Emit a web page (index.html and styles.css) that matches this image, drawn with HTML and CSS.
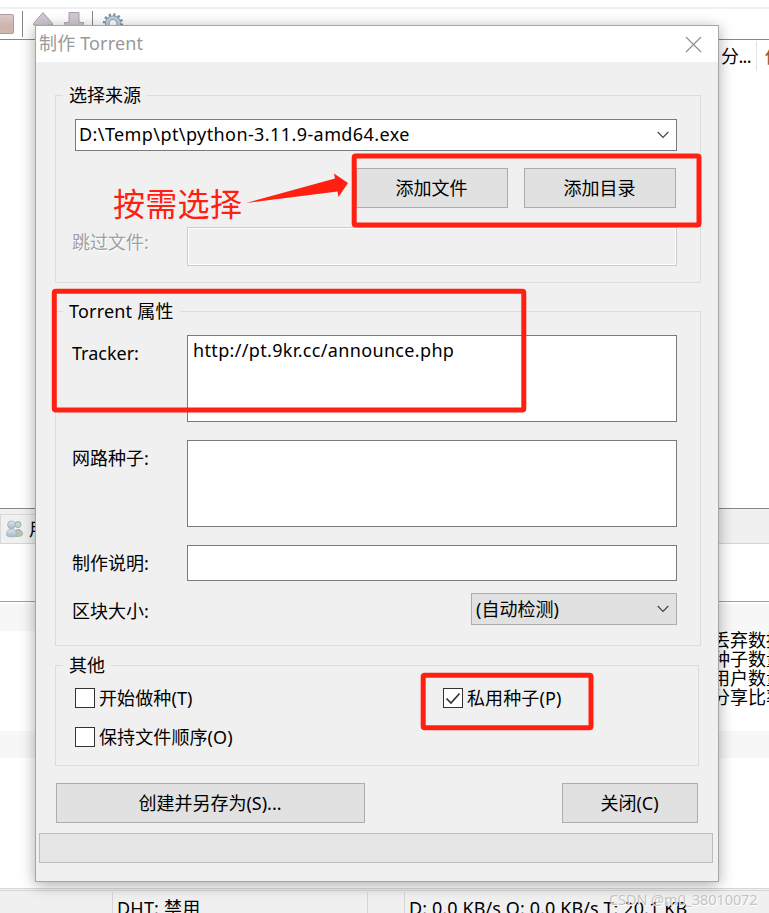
FILE: index.html
```html
<!DOCTYPE html>
<html lang="zh-CN">
<head>
<meta charset="utf-8">
<title>制作 Torrent</title>
<link rel="stylesheet" href="styles.css">
</head>
<body>
<div class="app">
  <header class="toolbar">
    <svg class="toolbar-icons" width="140" height="31" viewBox="0 0 140 31">
      <defs>
        <linearGradient id="stop" x1="0" y1="0" x2="0" y2="1"><stop offset="0" stop-color="#dccaca"/><stop offset=".6" stop-color="#cfb3ae"/><stop offset="1" stop-color="#cdb9a9"/></linearGradient>
        <linearGradient id="people" x1="0" y1="0" x2="0" y2="1"><stop offset="0" stop-color="#dfe5ea"/><stop offset="1" stop-color="#a9b9c6"/></linearGradient>
      </defs>
      <rect x="-6" y="6.5" width="19.5" height="19" rx="1.5" fill="url(#stop)" stroke="#b39a9a"/>
      <path d="M22.5 3v26M92.500 3v26" stroke="#858585"/>
      <path d="M43 4.500 52.500 15.500V17H48v8H38v-8h-4.500v-1.500z" fill="#d0c7d3" stroke="#aaa0ad"/>
      <path d="M69 4.500h10v10h4.500V16L74 25.500 64.500 16v-1.500H69z" fill="#d0c7d3" stroke="#aaa0ad"/>
      <circle cx="113" cy="15.500" r="8.500" fill="none" stroke="#7e93a5" stroke-width="3.500" stroke-dasharray="2.230 2.220"/>
      <circle cx="113" cy="15.500" r="5.800" fill="none" stroke="#7d93a5" stroke-width="4.600"/>
      <circle cx="113" cy="15.500" r="5.800" fill="none" stroke="#bccfde" stroke-width="3"/>
    </svg>
  </header>
  <section class="list">
    <div class="columns"><span class="col">分...</span><span class="col value">估计</span></div>
  </section>
  <nav class="tabs">
    <div class="tab">
      <svg width="18" height="18" viewBox="0 0 18 18">
        <path d="M8.500 16.500c0-4 .5-7 3.500-7s4.500 2 4.500 5c0 1.500-3 2-8 2z" fill="#b5c4b5" stroke="#93a394" stroke-width=".8"/>
        <circle cx="12" cy="4.500" r="3" fill="#c7d2c8" stroke="#93a394" stroke-width=".8"/>
        <path d="M.6 15c0-4 1.500-6 4.900-6s4.800 2 4.800 6c0 2.500-9.700 2.500-9.700 0z" fill="url(#people)" stroke="#9eafba" stroke-width=".8"/>
        <circle cx="5.500" cy="4.800" r="3.900" fill="url(#people)" stroke="#9eafba" stroke-width=".8"/>
      </svg>
      <span>用户</span>
    </div>
  </nav>
  <section class="details">
    <div class="band"></div>
    <ul class="stats"><li>丢弃数据</li><li>种子数量</li><li>用户数量</li><li>分享比率</li></ul>
    <div class="band"></div>
  </section>
  <footer class="status">
    <span class="cell first"></span><span class="cell dht">DHT: 禁用</span><span class="cell gap"></span><span class="cell rate">D: 0.0 KB/s O: 0.0 KB/s T: 20.1 KB</span>
  </footer>
</div>

<main class="dialog">
  <header class="title"><h1>制作 Torrent</h1>
    <svg width="17" height="17" viewBox="0 0 17 17"><path d="M1 1l15 15M16 1 1 16" stroke="#8c8c8c" stroke-width="1.100"/></svg>
  </header>
  <form class="body">
    <fieldset class="group source">
      <legend>选择来源</legend>
      <div class="box combo"><span class="path">D:\Temp\pt\python-3.11.9-amd64.exe</span><svg class="chev" width="12" height="8" viewBox="0 0 12 8"><path d="M.7 1 6 6.300 11.300 1" fill="none" stroke="#444" stroke-width="1.200"/></svg></div>
      <div class="pair"><button type="button">添加文件</button><button type="button">添加目录</button></div>
      <div class="row skip"><label>跳过文件:</label><div class="box disabled"></div></div>
    </fieldset>
    <fieldset class="group props">
      <legend class="latin">Torrent 属性</legend>
      <div class="row tall"><label>Tracker:</label><div class="box url">http://pt.9kr.cc/announce.php</div></div>
      <div class="row tall"><label>网路种子:</label><div class="box"></div></div>
      <div class="row note"><label>制作说明:</label><div class="box"></div></div>
      <div class="row size"><label>区块大小:</label><div class="box combo select"><span>(自动检测)</span><svg class="chev" width="12" height="8" viewBox="0 0 12 8"><path d="M.7 1 6 6.300 11.300 1" fill="none" stroke="#444" stroke-width="1.200"/></svg></div></div>
    </fieldset>
    <fieldset class="group other">
      <legend>其他</legend>
      <div class="checks">
        <label class="check"><i></i><span>开始做种(T)</span></label>
        <label class="check"><i><svg width="18" height="18" viewBox="0 0 18 18"><path d="M2.500 9.500 7 14 15.500 4.500" fill="none" stroke="#333" stroke-width="1.700"/></svg></i><span>私用种子(P)</span></label>
        <label class="check"><i></i><span>保持文件顺序(O)</span></label>
      </div>
    </fieldset>
    <div class="actions"><button type="button" class="create">创建并另存为(S)...</button><button type="button" class="close">关闭(C)</button></div>
    <div class="progress"></div>
  </form>
</main>

<svg class="marks" width="769" height="913" viewBox="0 0 769 913">
  <g fill="none" stroke="#ff2011" stroke-width="5">
    <rect x="354.200" y="156" width="344.800" height="69" rx="1.500"/>
    <rect x="54.300" y="291.200" width="469.500" height="118.800" rx="1.500"/>
    <rect x="423.200" y="675.200" width="167.800" height="52.500" rx="1.500"/>
  </g>
  <path d="M246 203 335 178.500 334 173.500 348 183 338.500 197 337.500 191.500z" fill="#ff2011"/>
</svg>
<p class="hint">按需选择</p>
<p class="watermark">CSDN @m0_38010072</p>
</body>
</html>
```
FILE: styles.css
```css
* { box-sizing: border-box; }
html, body { margin: 0; }
body {
  position: relative;
  width: 769px;
  height: 913px;
  overflow: hidden;
  background: #fff;
  color: #000;
  font: 18px/24px "Noto Sans", "Noto Sans CJK SC", sans-serif;
}
ul, p, h1 { margin: 0; padding: 0; font-size: inherit; font-weight: 400; list-style: none; }
svg { display: block; flex: none; }

.app { display: flex; flex-direction: column; height: 913px; overflow: hidden; }
.toolbar { height: 40px; padding-top: 1px; border-bottom: 1px solid #828790; background: linear-gradient(#f0f0f0, #f0f0f0) 0 7px / 100% 2px no-repeat; }
.toolbar-icons { margin-top: 7px; }
.list { height: 468px; }
.columns { display: flex; justify-content: flex-end; padding-top: 1px; height: 31px; }
.col { width: 39px; padding: 3px 0 0 3px; border-right: 1px solid #e2e2e2; white-space: nowrap; overflow: hidden; letter-spacing: -.6px; }
.col.value { width: 12px; padding-left: 8px; border: 0; color: #9a5610; }
.tabs { height: 36px; padding-top: 5px; background: #f0f0f0; border-top: 1px solid #828790; border-bottom: 1px solid #d5d5d5; }
.tab { display: flex; align-items: center; gap: 5px; height: 29px; width: 90px; padding-left: 5px; border: 1px solid #d9d9d9; border-bottom: 0; }
.details { height: 344px; padding-top: 60px; background: linear-gradient(#a0a0a0, #a0a0a0) 0 57px / 100% 1px no-repeat; }
.band { height: 27px; background: #f7f7f7; }
.stats { height: 100px; padding-left: 712px; line-height: 19px; white-space: nowrap; }
.status { display: flex; height: 25px; flex: none; border-top: 1px solid #d7d7d7; background: linear-gradient(#d7d7d7, #d7d7d7) 0 1px / 100% 1px no-repeat #f0f0f0; padding-top: 3px; }
.cell { flex: none; height: 30px; padding: 4px 0 0 4px; border-right: 1px solid #d7d7d7; white-space: nowrap; }
.first { width: 113px; }
.dht { width: 255px; letter-spacing: .2px; }
.gap { width: 37px; }
.rate { border: 0; letter-spacing: .1px; }

.dialog {
  position: absolute;
  left: 35px;
  top: 25px;
  width: 684px;
  height: 857px;
  border: 1px solid #a5a5a5;
  background: #f0f0f0;
  box-shadow: 0 3px 14px rgba(0, 0, 0, .33);
}
.title { display: flex; justify-content: space-between; align-items: center; height: 36px; padding: 0 16px 0 3px; background: #fff; color: #999; }
.title h1 { padding-bottom: 2px; letter-spacing: .15px; }
.body { padding: 20px 0 0 19px; }
.group { width: 646px; margin: 0; padding: 0 23px 0 16px; border: 1px solid #dcdcdc; min-inline-size: 0; }
.group legend { height: 27px; margin-left: -9px; padding: 0 6px; line-height: 27px; }
.group .latin { letter-spacing: .2px; }
.source { height: 201px; }
.props { height: 348px; margin-top: 15px; }
.other { width: 644px; height: 114px; margin-top: 6px; }
.box { height: 100%; flex: 1; border: 1px solid #7a7a7a; background: #fff; }
.combo { display: flex; justify-content: space-between; align-items: center; height: 32px; padding: 0 7px 0 4px; }
.source > .combo { margin: 10px 0 0 3px; padding-left: 3px; }
.path { padding-bottom: 2px; letter-spacing: .41px; }
button { height: 40px; padding: 0 1px 0 0; border: 1px solid #adadad; background: #e1e1e1; color: #000; font: inherit; }
.pair { display: flex; justify-content: flex-end; gap: 16px; margin: 17px 1px 0 0; }
.pair button { width: 152px; }
.row { display: flex; }
.row label { width: 115px; }
.skip { height: 39px; margin-top: 19px; }
.skip label { padding-top: 3px; color: #a0a0a0; text-shadow: 1px 1px #fff; }
.disabled { border-color: #ccc; background: #f0f0f0; box-shadow: inset 0 0 0 1px #fff; }
.tall { height: 87px; margin-top: 18px; }
.tall label { padding-top: 6px; }
legend + .tall { margin-top: 10px; }
.url { padding: 2px 5px; letter-spacing: .34px; }
.note { height: 36px; margin-top: 18px; }
.note label { padding-top: 6px; }
.size { justify-content: space-between; margin-top: 12px; }
.size label { padding-top: 6px; }
.select { flex: none; width: 206px; border-color: #adadad; background: #e1e1e1; }
.checks { display: grid; grid-template-columns: 368px 1fr; row-gap: 15px; padding: 7px 0 0 3px; }
.check { display: flex; align-items: center; gap: 4px; white-space: nowrap; letter-spacing: .1px; }
.check i { width: 20px; height: 20px; border: 1px solid #333; background: #fff; }
.actions { display: flex; justify-content: space-between; width: 643px; margin-top: 17px; padding-left: 1px; }
.create { width: 309px; }
.close { width: 136px; }
.progress { width: 674px; height: 30px; margin: 10px 0 0 -16px; border: 1px solid #bcbcbc; background: #e6e6e6; }

.marks { position: absolute; left: 0; top: 0; }
.hint { position: absolute; left: 113px; top: 183px; color: #ff2011; font-size: 32px; line-height: 42px; letter-spacing: .3px; }
.watermark { position: absolute; left: 609px; top: 887px; color: #c4c4c4; font-size: 14.5px; letter-spacing: -.1px; text-shadow: 1px 1px #fff; white-space: nowrap; }
```
